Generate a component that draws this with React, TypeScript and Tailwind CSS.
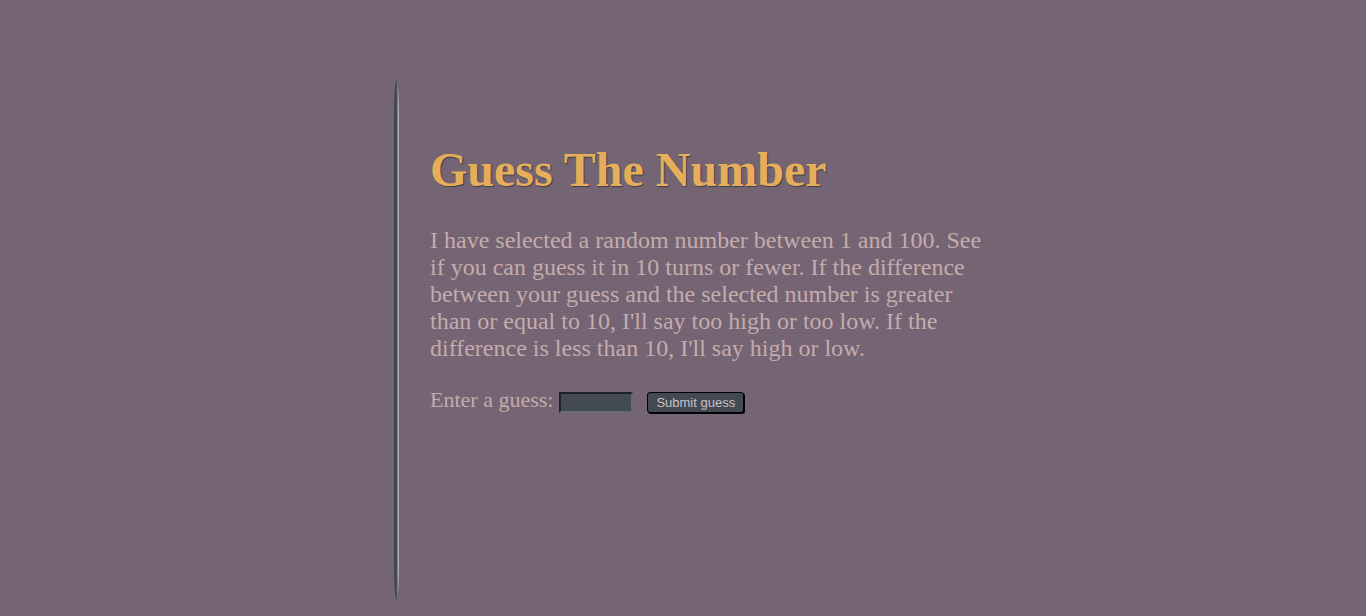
export default function App() {
  return (
    <div className="min-h-[616px] w-full bg-[#756473] pl-[394px] pt-[80px] font-['Liberation_Serif',serif]">
      <div className="flex">
        {/* left rule */}
        <div className="h-[520px] w-[5px] shrink-0 rounded-[2.5px/40px] bg-[linear-gradient(to_right,#3b424c_0%,#444b55_55%,#9da0a8_80%,#c8c8cc_100%)]" />
        <div className="pl-[31px] pt-[62px]">
          <h1 className="text-[48px] font-bold leading-[56px] text-[#e6ae5a] [text-shadow:1px_1px_1px_#3c3f4a]">
            Guess The Number
          </h1>
          <p className="mt-[29px] w-[560px] text-[24px] leading-[27px] text-[#c4acac]">
            I have selected a random number between 1 and 100. See if you can guess it in 10 turns or fewer. If the
            difference between your guess and the selected number is greater than or equal to 10, I'll say too high or
            too low. If the difference is less than 10, I'll say high or low.
          </p>
          <div className="mt-[24px] flex items-center text-[22px] leading-[27px] text-[#c4acac]">
            <label htmlFor="guess">Enter a guess:</label>
            <input
              id="guess"
              type="text"
              className="ml-[6px] mt-[5px] h-[21px] w-[74px] border-2 border-t-[#1e2126] border-l-[#1e2126] border-r-[#6a6a70] border-b-[#6a6a70] bg-[#434a53] outline-none"
            />
            <button className="ml-[14px] mt-[5px] h-[21px] rounded-[3px] border border-black bg-[#434a53] px-[8px] font-['Liberation_Sans',sans-serif] text-[13px] leading-[17px] text-[#c8c2c6] shadow-[1px_1px_0_#000]">
              Submit guess
            </button>
          </div>
        </div>
      </div>
    </div>
  );
}
